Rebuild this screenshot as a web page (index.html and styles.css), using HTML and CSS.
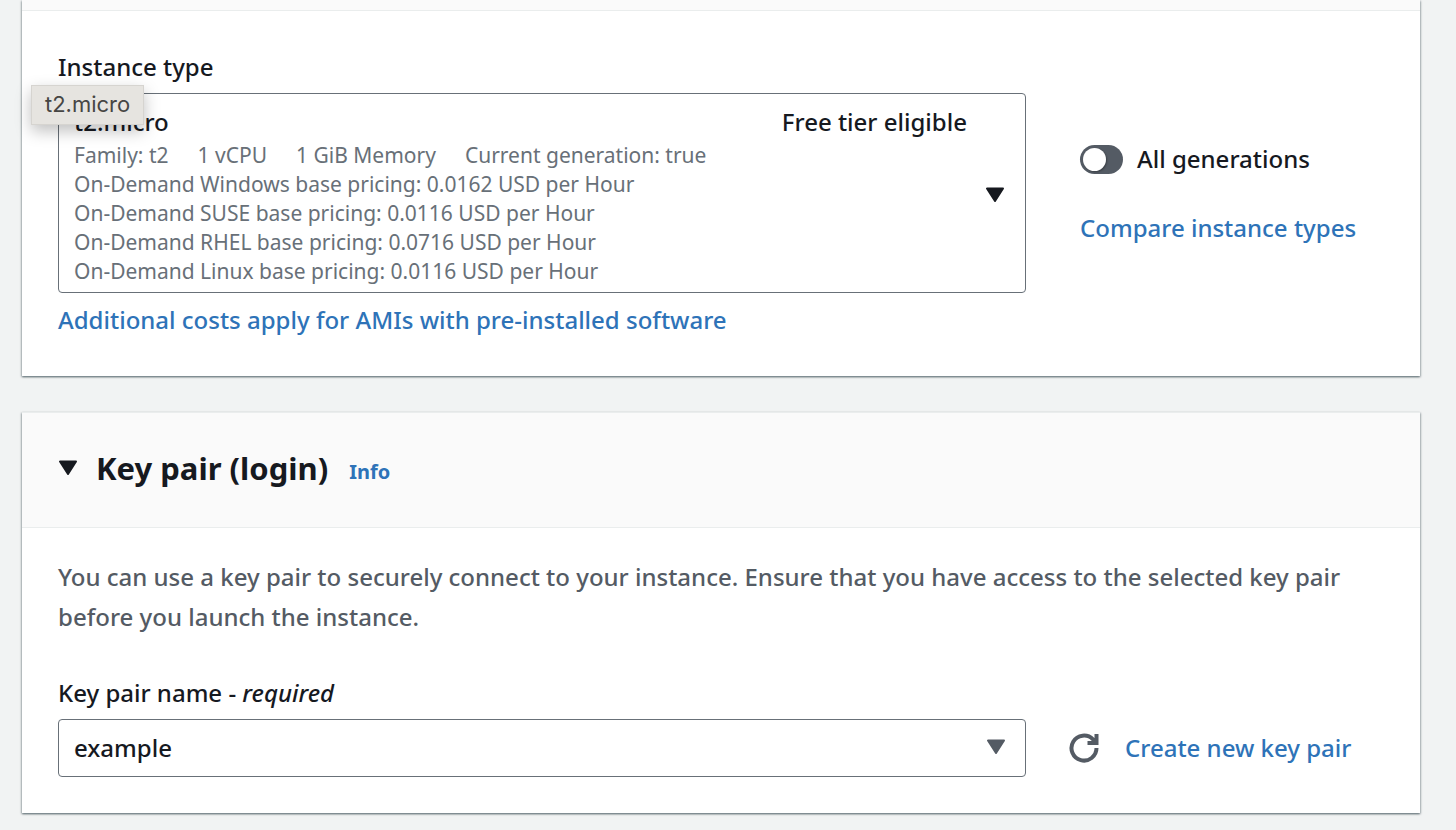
FILE: index.html
```html
<!DOCTYPE html>
<html lang="en">
<head>
<meta charset="utf-8">
<title>Launch an instance</title>
<link rel="stylesheet" href="styles.css">
</head>
<body>
<main class="page">
  <section class="panel">
    <div class="panel-header panel-header-cut"></div>
    <div class="panel-body">
      <div class="label" id="type-label">Instance type</div>
      <div class="field-row">
        <div class="field">
          <button class="option" type="button" aria-haspopup="listbox" aria-labelledby="type-label type-value">
            <span class="option-text" id="type-value">
              <span class="option-title"><span>t2.micro</span><span>Free tier eligible</span></span>
              <span class="option-tags"><span>Family: t2</span><span>1 vCPU</span><span>1 GiB Memory</span><span>Current generation: true</span></span>
              <span class="option-line">On-Demand Windows base pricing: 0.0162 USD per Hour</span>
              <span class="option-line">On-Demand SUSE base pricing: 0.0116 USD per Hour</span>
              <span class="option-line">On-Demand RHEL base pricing: 0.0716 USD per Hour</span>
              <span class="option-line">On-Demand Linux base pricing: 0.0116 USD per Hour</span>
            </span>
            <svg class="caret" viewBox="0 0 20 16" aria-hidden="true"><path d="M2 1.500h16l-8 12.500z"/></svg>
          </button>
          <div class="tooltip" role="tooltip">t2.micro</div>
        </div>
        <div class="side side-stack">
          <label class="toggle"><input class="toggle-input" type="checkbox" role="switch">All generations</label>
          <a class="link" href="#">Compare instance types</a>
        </div>
      </div>
      <div class="hint"><a class="link" href="#">Additional costs apply for AMIs with pre-installed software</a></div>
    </div>
  </section>

  <section class="panel">
    <header class="panel-header">
      <button class="expander" type="button" aria-expanded="true">
        <svg class="caret" viewBox="0 0 20 16" aria-hidden="true"><path d="M2 1.500h16l-8 12.500z"/></svg>
        <span class="title">Key pair (login)</span>
      </button>
      <a class="info" href="#">Info</a>
    </header>
    <div class="panel-body panel-body-text">
      <p class="description">You can use a key pair to securely connect to your instance. Ensure that you have access to the selected key pair before you launch the instance.</p>
      <label class="label" for="key-pair">Key pair name - <em>required</em></label>
      <div class="field-row">
        <div class="field">
          <select class="select" id="key-pair"><option>example</option></select>
          <svg class="caret select-caret" viewBox="0 0 20 16" aria-hidden="true"><path d="M2 1.500h16l-8 12.500z"/></svg>
        </div>
        <div class="side side-inline">
          <button class="refresh" type="button" aria-label="Refresh key pairs">
            <svg viewBox="0 0 30 30" aria-hidden="true"><path d="M27.500 15A12.500 12.500 0 1 1 24 6.400L27 9.500M27.500 1v9H18.500"/></svg>
          </button>
          <a class="link" href="#">Create new key pair</a>
        </div>
      </div>
    </div>
  </section>
</main>
</body>
</html>
```
FILE: styles.css
```css
* { box-sizing: border-box; }

body {
  margin: 0;
  background: #f1f3f3;
  color: #16191f;
  font: 500 24px/40px "Noto Sans", "Open Sans", sans-serif;
}

button, select { font: inherit; color: inherit; }

.page {
  display: flex;
  flex-direction: column;
  gap: 36px;
  padding: 0 36px 16px 22px;
}

.panel {
  background: #fff;
  box-shadow: 0 1px 2px rgba(0, 28, 36, 0.5), 1px 1px 2px rgba(0, 28, 36, 0.15), -1px 1px 2px rgba(0, 28, 36, 0.15);
}

.panel-header {
  display: flex;
  align-items: center;
  gap: 21px;
  min-height: 116px;
  padding: 0 36px 4px;
  background: #fafafa;
  border-top: 1px solid #eaeded;
  border-bottom: 1px solid #eaeded;
}

.panel-header-cut { min-height: 11px; border-top: 0; }

.panel-body { padding: 36px; }
.panel-body-text { padding-top: 29px; }

.label { display: block; margin-bottom: 6px; }

.field-row {
  display: grid;
  grid-template-columns: minmax(0, 1fr) 358px;
}

.field { position: relative; }

.option {
  display: flex;
  align-items: center;
  gap: 18px;
  width: 100%;
  padding: 9px 20px 6px 15px;
  background: #fff;
  border: 1px solid #687078;
  border-radius: 4px;
  text-align: left;
}

.option-text { flex: 1; }

.option-title {
  display: flex;
  justify-content: space-between;
  line-height: 38px;
}

.option-tags, .option-line {
  display: block;
  color: #687078;
  font-size: 21px;
  font-weight: 400;
  line-height: 29px;
}

.option-tags { display: flex; gap: 29px; }

.caret { flex: none; width: 20px; height: 16px; fill: #16191f; stroke: #16191f; stroke-width: 2; stroke-linejoin: round; }

.tooltip {
  position: absolute;
  top: -8px;
  left: -27px;
  padding: 0 13px 2px;
  background: #e6e4e0;
  border: 1px solid #d6d4d0;
  box-shadow: 0 6px 16px rgba(0, 0, 0, 0.25);
  color: #464644;
  font: 400 22px/36px Inter, sans-serif;
}

.side-stack {
  display: flex;
  flex-direction: column;
  align-items: flex-start;
  gap: 29px;
  padding: 46px 0 0 54px;
}

.toggle { display: flex; align-items: center; gap: 14px; }

.toggle-input {
  appearance: none;
  width: 43px;
  height: 29px;
  margin: 0;
  padding: 3px;
  background: #545b64;
  border-radius: 15px;
}

.toggle-input::before {
  content: "";
  display: block;
  width: 23px;
  height: 23px;
  background: #fff;
  border-radius: 50%;
  box-shadow: 1px 1px 2px rgba(0, 0, 0, 0.3);
}

.link, .info { color: #2e73b8; text-decoration: none; }

.hint { margin-top: 7px; }

.expander {
  display: flex;
  align-items: center;
  gap: 18px;
  padding: 0;
  background: none;
  border: 0;
}

.title { font-size: 31px; font-weight: 700; }

.info { font-size: 20px; font-weight: 700; padding-top: 8px; }

.description { margin: 0 0 36px; color: #545b64; }

.select {
  appearance: none;
  display: block;
  width: 100%;
  height: 58px;
  padding: 0 50px 0 15px;
  background: #fff;
  border: 1px solid #687078;
  border-radius: 4px;
}

.select-caret {
  position: absolute;
  top: 20px;
  right: 20px;
  fill: #545b64;
  stroke: #545b64;
  pointer-events: none;
}

.side-inline {
  display: flex;
  align-items: center;
  gap: 18px;
  padding-left: 35px;
}

.refresh {
  display: flex;
  padding: 8px;
  background: none;
  border: 0;
}

.refresh svg { width: 30px; height: 30px; fill: none; stroke: #545b64; stroke-width: 4; }
```
